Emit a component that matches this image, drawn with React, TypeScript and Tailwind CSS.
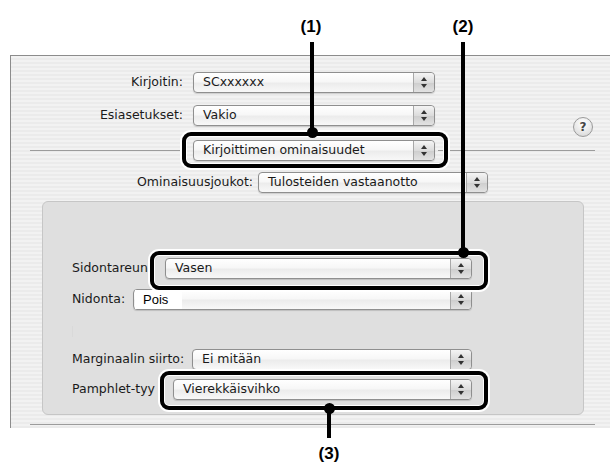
import React from "react";

const font = { fontFamily: '"DejaVu Sans", "Liberation Sans", sans-serif' };

function Stepper() {
  return (
    <div className="w-[21px] h-full border-l border-[#a8a8a8] bg-[linear-gradient(180deg,#f4f4f4_0%,#dcdcdc_50%,#cdcdcd_51%,#e2e2e2_100%)] rounded-r-[4px] flex flex-col items-center justify-center gap-[3px]">
      <svg width="6" height="4" viewBox="0 0 6 4"><path d="M3 0 L6 4 L0 4 Z" fill="#333" /></svg>
      <svg width="6" height="4" viewBox="0 0 6 4"><path d="M0 0 L6 0 L3 4 Z" fill="#333" /></svg>
    </div>
  );
}

function Select({ w, text, arial }: { w: string; text: string; arial?: boolean }) {
  return (
    <div
      className={`${w} h-[21px] shrink-0 flex rounded-[4px] border border-[#8f8f8f] bg-[linear-gradient(180deg,#ffffff_0%,#f7f7f7_45%,#ececec_55%,#f8f8f8_100%)] shadow-[0_1px_1px_rgba(0,0,0,0.15)]`}
    >
      <div className="flex-1 flex items-center pl-[9px] overflow-hidden whitespace-nowrap">
        {arial ? (
          <span className="bg-white pr-[14px] text-[13px] text-black leading-[19px] -ml-[8px] pl-[8px]" style={{ fontFamily: '"Liberation Sans", Arial, sans-serif' }}>
            {text}
          </span>
        ) : (
          <span className="text-[12.5px] text-[#1a1a1a]">{text}</span>
        )}
      </div>
      <Stepper />
    </div>
  );
}

function Label({ w, text }: { w: string; text: string }) {
  return (
    <div className={`${w} shrink-0 text-right text-[12.5px] text-[#1a1a1a] whitespace-nowrap`}>{text}</div>
  );
}

function LeftLabel({ w, text }: { w: string; text: string }) {
  return (
    <div className={`${w} shrink-0 text-left text-[12.5px] text-[#1a1a1a] whitespace-nowrap`}>{text}</div>
  );
}

export default function App() {
  return (
    <div className="relative w-[610px] h-[475px] bg-white overflow-hidden" style={font}>
      <div className="pt-[55px] pl-[10px]">
        <div className="w-[600px] h-[373px] border-t border-l border-[#8c8c8c] bg-[repeating-linear-gradient(0deg,#ebebeb_0px,#ebebeb_2px,#f2f2f2_2px,#f2f2f2_4px)] flex flex-col">
          {/* Row 1 */}
          <div className="mt-[16px] h-[21px] flex items-center">
            <Label w="w-[172px]" text="Kirjoitin:" />
            <div className="ml-[10px]">
              <Select w="w-[242px]" text="SCxxxxxx" />
            </div>
          </div>
          {/* Row 2 */}
          <div className="mt-[12px] h-[21px] flex items-start">
            <div className="h-[21px] flex items-center">
              <Label w="w-[172px]" text="Esiasetukset:" />
            </div>
            <div className="ml-[10px]">
              <Select w="w-[242px]" text="Vakio" />
            </div>
            <div className="ml-[138px] mt-[12px] w-[20px] h-[20px] shrink-0 rounded-full border border-[#9a9a9a] bg-[radial-gradient(circle_at_50%_30%,#ffffff_0%,#e6e6e6_60%,#cfcfcf_100%)] flex items-center justify-center text-[12px] font-bold text-[#444]">
              ?
            </div>
          </div>
          {/* Row 3 */}
          <div className="mt-[14px] h-[21px] flex items-center">
            <div className="ml-[19px] w-[155px] h-px bg-[#9c9c9c]" />
            <div className="ml-[8px]">
              <Select w="w-[242px]" text="Kirjoittimen ominaisuudet" />
            </div>
            <div className="ml-[3px] w-[157px] h-px bg-[#9c9c9c]" />
          </div>
          {/* Row 4 */}
          <div className="mt-[11px] h-[21px] flex items-center">
            <Label w="w-[242px]" text="Ominaisuusjoukot:" />
            <div className="ml-[5px]">
              <Select w="w-[230px]" text="Tulosteiden vastaanotto" />
            </div>
          </div>
          {/* Group box */}
          <div className="mt-[8px] ml-[31px] w-[542px] h-[214px] shrink-0 rounded-[6px] border border-[#c6c6c6] bg-[#dfdfdf] flex flex-col pl-[29px]">
            <div className="mt-[56px] h-[21px] flex items-center">
              <LeftLabel w="w-[93px]" text="Sidontareun" />
              <Select w="w-[307px]" text="Vasen" />
            </div>
            <div className="mt-[10px] h-[21px] flex items-center">
              <LeftLabel w="w-[61px]" text="Nidonta:" />
              <Select w="w-[339px]" text="Pois" arial />
            </div>
            <div className="mt-[16px] w-px h-[11px] bg-[#d9d9d9]" />
            <div className="mt-[12px] h-[21px] flex items-center">
              <LeftLabel w="w-[120px]" text="Marginaalin siirto:" />
              <Select w="w-[280px]" text="Ei mitään" />
            </div>
            <div className="mt-[9px] h-[21px] flex items-center">
              <LeftLabel w="w-[101px]" text="Pamphlet-tyy" />
              <Select w="w-[299px]" text="Vierekkäisvihko" />
            </div>
          </div>
          <div className="mt-[9px] ml-[19px] w-[565px] h-px bg-[#9c9c9c]" />
        </div>
      </div>

      {/* Callout (1) */}
      <div className="absolute left-[297px] top-[17px] w-[28px] text-center text-[17px] font-bold text-black leading-[20px]" style={{ fontFamily: '"Liberation Sans", Arial, sans-serif' }}>(1)</div>
      <div className="absolute left-[310px] top-[42px] w-[4px] h-[90px] bg-black" />
      <div className="absolute left-[182px] top-[132px] w-[266px] h-[36px] border-[4px] border-black rounded-[9px] shadow-[0_0_0_2px_#ffffff,inset_0_0_0_1px_#ffffff]" />
      <div className="absolute left-[307px] top-[127px] w-[11px] h-[11px] rounded-full bg-black" />

      {/* Callout (2) */}
      <div className="absolute left-[449px] top-[17px] w-[28px] text-center text-[17px] font-bold text-black leading-[20px]" style={{ fontFamily: '"Liberation Sans", Arial, sans-serif' }}>(2)</div>
      <div className="absolute left-[461px] top-[42px] w-[4px] h-[210px] bg-black" />
      <div className="absolute left-[150px] top-[251px] w-[338px] h-[39px] border-[4px] border-black rounded-[9px] shadow-[0_0_0_2px_#ffffff,inset_0_0_0_1px_#ffffff]" />
      <div className="absolute left-[458px] top-[247px] w-[11px] h-[11px] rounded-full bg-black" />

      {/* Callout (3) */}
      <div className="absolute left-[160px] top-[371px] w-[328px] h-[39px] border-[4px] border-black rounded-[9px] shadow-[0_0_0_2px_#ffffff,inset_0_0_0_1px_#ffffff]" />
      <div className="absolute left-[327px] top-[408px] w-[4px] h-[30px] bg-black" />
      <div className="absolute left-[324px] top-[403px] w-[11px] h-[11px] rounded-full bg-black" />
      <div className="absolute left-[315px] top-[444px] w-[28px] text-center text-[17px] font-bold text-black leading-[20px]" style={{ fontFamily: '"Liberation Sans", Arial, sans-serif' }}>(3)</div>
    </div>
  );
}
